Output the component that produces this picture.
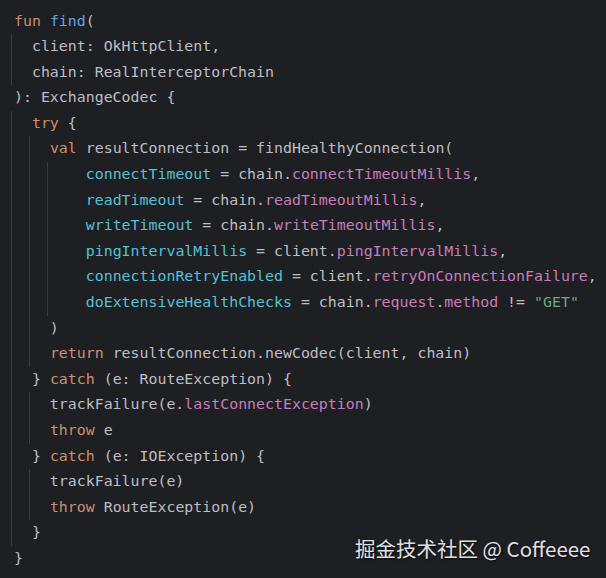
type Tok = [string, string?];

const K = "text-[#cf8e6d]"; // keyword
const F = "text-[#56a8f5]"; // function decl
const N = "text-[#56c1d6]"; // named arg
const P = "text-[#c77dbb]"; // property
const S = "text-[#6aab73]"; // string

type Line = { guides: number[]; toks: Tok[] };

const lines: Line[] = [
  { guides: [], toks: [["fun ", K], ["find", F], ["("]] },
  { guides: [0], toks: [["  client: OkHttpClient,"]] },
  { guides: [0], toks: [["  chain: RealInterceptorChain"]] },
  { guides: [], toks: [["): ExchangeCodec {"]] },
  { guides: [0], toks: [["  "], ["try", K], [" {"]] },
  { guides: [0, 1], toks: [["    "], ["val", K], [" resultConnection = findHealthyConnection("]] },
  { guides: [0, 1, 2], toks: [["        "], ["connectTimeout", N], [" = chain."], ["connectTimeoutMillis", P], [","]] },
  { guides: [0, 1, 2], toks: [["        "], ["readTimeout", N], [" = chain."], ["readTimeoutMillis", P], [","]] },
  { guides: [0, 1, 2], toks: [["        "], ["writeTimeout", N], [" = chain."], ["writeTimeoutMillis", P], [","]] },
  { guides: [0, 1, 2], toks: [["        "], ["pingIntervalMillis", N], [" = client."], ["pingIntervalMillis", P], [","]] },
  { guides: [0, 1, 2], toks: [["        "], ["connectionRetryEnabled", N], [" = client."], ["retryOnConnectionFailure", P], [","]] },
  { guides: [0, 1, 2], toks: [["        "], ["doExtensiveHealthChecks", N], [" = chain."], ["request", P], ["."], ["method", P], [" != "], ["\"GET\"", S]] },
  { guides: [0, 1], toks: [["    )"]] },
  { guides: [0, 1], toks: [["    "], ["return", K], [" resultConnection.newCodec(client, chain)"]] },
  { guides: [0], toks: [["  } "], ["catch", K], [" (e: RouteException) {"]] },
  { guides: [0, 1], toks: [["    trackFailure(e."], ["lastConnectException", P], [")"]] },
  { guides: [0, 1], toks: [["    "], ["throw", K], [" e"]] },
  { guides: [0], toks: [["  } "], ["catch", K], [" (e: IOException) {"]] },
  { guides: [0, 1], toks: [["    trackFailure(e)"]] },
  { guides: [0, 1], toks: [["    "], ["throw", K], [" RouteException(e)"]] },
  { guides: [0], toks: [["  }"]] },
  { guides: [], toks: [["}"]] },
];

const guideX = ["left-[11px]", "left-[29px]", "left-[47px]"];

export default function App() {
  return (
    <div className="relative w-[606px] h-[578px] overflow-hidden bg-[#1e1f22] pt-[8.5px]">
      <div className="font-['DejaVu_Sans_Mono',monospace] text-[14.9px] leading-[25.6px] text-[#bcbec4]">
        {lines.map((line, i) => (
          <div key={i} className="relative h-[25.6px] pl-[14px] whitespace-pre">
            {line.guides.map((g) => (
              <span key={g} className={`absolute top-0 bottom-0 w-px bg-[#393b40] ${guideX[g]}`} />
            ))}
            {line.toks.map(([t, c], j) => (
              <span key={j} className={c}>
                {t}
              </span>
            ))}
          </div>
        ))}
      </div>

      {/* watermark */}
      <div className="absolute left-[355px] top-[534px] font-['Noto_Sans_CJK_SC',sans-serif] text-[20.5px] leading-[28px] text-[#e0e0e0] [text-shadow:1px_1px_2px_rgba(0,0,0,0.8)] whitespace-nowrap">
        掘金技术社区 @ Coffeeee
      </div>
    </div>
  );
}
